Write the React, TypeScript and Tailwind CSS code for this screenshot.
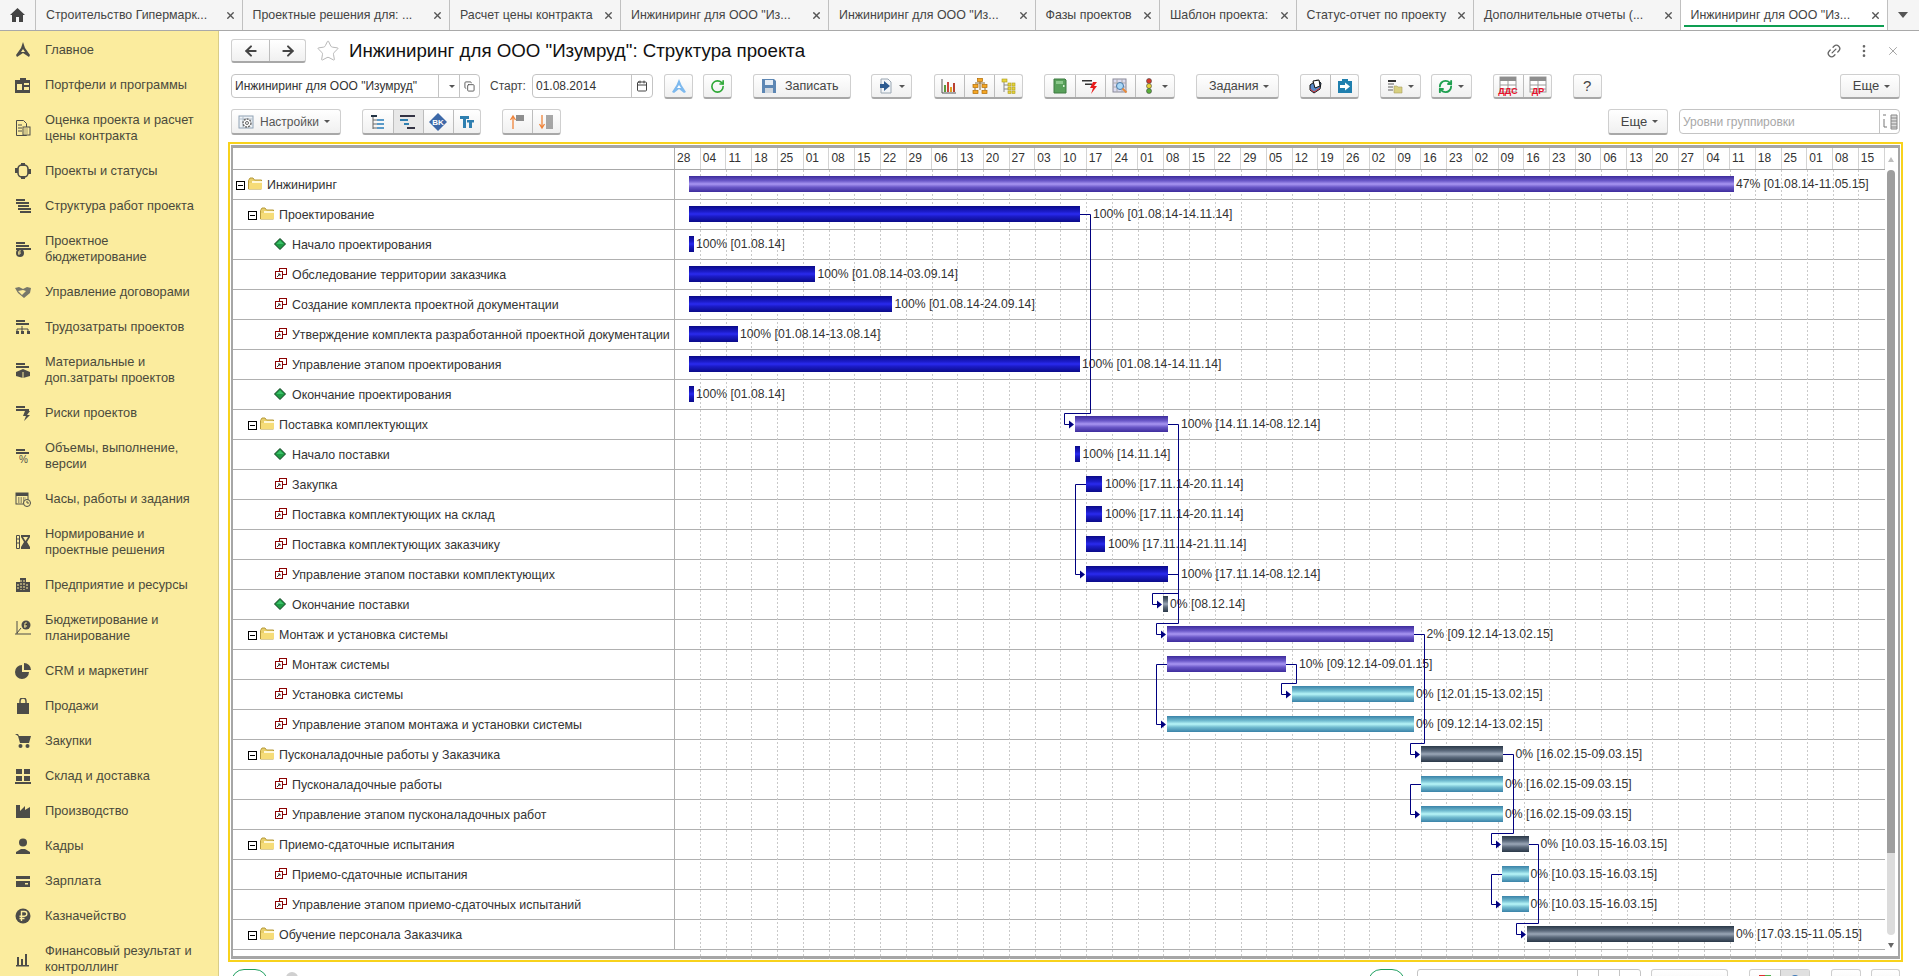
import type { ReactNode } from 'react';
import { ArrowLeft, ArrowRight, Calendar, Copy, Link2, MoreVertical, RefreshCw, RotateCw, Star, X } from 'lucide-react';

type Kind = 'purple' | 'blue' | 'cyan' | 'dark';
type Row = { name: string; level: 0 | 1 | 2; type: 'group' | 'task' | 'mile'; from: number; to: number; kind: Kind; lx: number; text: string };

const barClass: Record<Kind, string> = {
  purple: 'bg-[linear-gradient(#3d2c9c,#6a58c8_30%,#a896f2_50%,#6a58c8_70%,#3d2c9c)]',
  blue: 'bg-[linear-gradient(#0a0a88,#1c1cc8_35%,#2a2aee_50%,#1c1cc8_65%,#0a0a88)]',
  cyan: 'bg-[linear-gradient(#3a82a8,#72bcd0_30%,#b8f6f8_50%,#72bcd0_70%,#3a82a8)]',
  dark: 'bg-[linear-gradient(#2a3848,#5c6a7c_30%,#9aa6b6_50%,#5c6a7c_70%,#2a3848)]',
};

const rows: Row[] = [
  { name: 'Инжиниринг', level: 0, type: 'group', from: 689, to: 1734, kind: 'purple', lx: 1736, text: '47% [01.08.14-11.05.15]' },
  { name: 'Проектирование', level: 1, type: 'group', from: 689, to: 1080, kind: 'blue', lx: 1093, text: '100% [01.08.14-14.11.14]' },
  { name: 'Начало проектирования', level: 2, type: 'mile', from: 689, to: 694, kind: 'blue', lx: 696, text: '100% [01.08.14]' },
  { name: 'Обследование территории заказчика', level: 2, type: 'task', from: 689, to: 815, kind: 'blue', lx: 817.5, text: '100% [01.08.14-03.09.14]' },
  { name: 'Создание комплекта проектной документации', level: 2, type: 'task', from: 689, to: 892, kind: 'blue', lx: 894.5, text: '100% [01.08.14-24.09.14]' },
  { name: 'Утверждение комплекта разработанной проектной документации', level: 2, type: 'task', from: 689, to: 738, kind: 'blue', lx: 740, text: '100% [01.08.14-13.08.14]' },
  { name: 'Управление этапом проектирования', level: 2, type: 'task', from: 689, to: 1080, kind: 'blue', lx: 1082, text: '100% [01.08.14-14.11.14]' },
  { name: 'Окончание проектирования', level: 2, type: 'mile', from: 689, to: 694, kind: 'blue', lx: 696, text: '100% [01.08.14]' },
  { name: 'Поставка комплектующих', level: 1, type: 'group', from: 1075, to: 1168, kind: 'purple', lx: 1181, text: '100% [14.11.14-08.12.14]' },
  { name: 'Начало поставки', level: 2, type: 'mile', from: 1075, to: 1080, kind: 'blue', lx: 1082.5, text: '100% [14.11.14]' },
  { name: 'Закупка', level: 2, type: 'task', from: 1086, to: 1102, kind: 'blue', lx: 1105, text: '100% [17.11.14-20.11.14]' },
  { name: 'Поставка комплектующих на склад', level: 2, type: 'task', from: 1086, to: 1102, kind: 'blue', lx: 1105, text: '100% [17.11.14-20.11.14]' },
  { name: 'Поставка комплектующих заказчику', level: 2, type: 'task', from: 1086, to: 1105, kind: 'blue', lx: 1108, text: '100% [17.11.14-21.11.14]' },
  { name: 'Управление этапом поставки комплектующих', level: 2, type: 'task', from: 1086, to: 1168, kind: 'blue', lx: 1181, text: '100% [17.11.14-08.12.14]' },
  { name: 'Окончание поставки', level: 2, type: 'mile', from: 1163, to: 1168, kind: 'dark', lx: 1170, text: '0% [08.12.14]' },
  { name: 'Монтаж и установка системы', level: 1, type: 'group', from: 1167, to: 1414, kind: 'purple', lx: 1426.5, text: '2% [09.12.14-13.02.15]' },
  { name: 'Монтаж системы', level: 2, type: 'task', from: 1167, to: 1286, kind: 'purple', lx: 1299, text: '10% [09.12.14-09.01.15]' },
  { name: 'Установка системы', level: 2, type: 'task', from: 1292, to: 1414, kind: 'cyan', lx: 1416, text: '0% [12.01.15-13.02.15]' },
  { name: 'Управление этапом монтажа и установки системы', level: 2, type: 'task', from: 1167, to: 1414, kind: 'cyan', lx: 1416, text: '0% [09.12.14-13.02.15]' },
  { name: 'Пусконаладочные работы у Заказчика', level: 1, type: 'group', from: 1421, to: 1503, kind: 'dark', lx: 1515.5, text: '0% [16.02.15-09.03.15]' },
  { name: 'Пусконаладочные работы', level: 2, type: 'task', from: 1421, to: 1503, kind: 'cyan', lx: 1505, text: '0% [16.02.15-09.03.15]' },
  { name: 'Управление этапом пусконаладочных работ', level: 2, type: 'task', from: 1421, to: 1503, kind: 'cyan', lx: 1505, text: '0% [16.02.15-09.03.15]' },
  { name: 'Приемо-сдаточные испытания', level: 1, type: 'group', from: 1502, to: 1529, kind: 'dark', lx: 1540.5, text: '0% [10.03.15-16.03.15]' },
  { name: 'Приемо-сдаточные испытания', level: 2, type: 'task', from: 1502, to: 1529, kind: 'cyan', lx: 1530.5, text: '0% [10.03.15-16.03.15]' },
  { name: 'Управление этапом приемо-сдаточных испытаний', level: 2, type: 'task', from: 1502, to: 1529, kind: 'cyan', lx: 1530.5, text: '0% [10.03.15-16.03.15]' },
  { name: 'Обучение персонала Заказчика', level: 1, type: 'group', from: 1527, to: 1734, kind: 'dark', lx: 1736, text: '0% [17.03.15-11.05.15]' },
];

const weeks = '28 04 11 18 25 01 08 15 22 29 06 13 20 27 03 10 17 24 01 08 15 22 29 05 12 19 26 02 09 16 23 02 09 16 23 30 06 13 20 27 04 11 18 25 01 08 15'.split(' ');

// линии связей в координатах страницы
const links = [
  ['M1080 214.5H1090.5V413.5H1064.5V424.5H1073', 1073, 424.5],
  ['M1168 424.5H1178.5V623.5H1156.5V634.5H1165', 1165, 634.5],
  ['M1168 574.5H1178.5M1178.5 593.5H1152.5V604.5H1161', 1161, 604.5],
  ['M1086 484.5H1075.5V574.5H1084', 1084, 574.5],
  ['M1414 634.5H1424.5V743.5H1410.5V754.5H1419', 1419, 754.5],
  ['M1167 664.5H1156.5V724.5H1165', 1165, 724.5],
  ['M1286 664.5H1296.5V683.5H1281.5V694.5H1290', 1290, 694.5],
  ['M1421 784.5H1410.5V814.5H1419', 1419, 814.5],
  ['M1503 754.5H1513.5V833.5H1491.5V844.5H1500', 1500, 844.5],
  ['M1502 874.5H1491.5V904.5H1500', 1500, 904.5],
  ['M1529 844.5H1538.5V923.5H1516.5V934.5H1525', 1525, 934.5],
] as const;

const S = ({ children, w = 16, h = 16, className }: { children: ReactNode; w?: number; h?: number; className?: string }) => (
  <svg width={w} height={h} viewBox={`0 0 ${w} ${h}`} className={`shrink-0 ${className ?? ''}`}>{children}</svg>
);

const ink = '#4c4c48';
const bars3 = (
  <>
    <rect x="1" y="1" width="9" height="2" fill={ink} />
    <rect x="1" y="4" width="13" height="2" fill={ink} />
  </>
);

const side: { label: string; icon: ReactNode }[] = [
  { label: 'Главное', icon: <S><path d="M8 0l2 6 5 7-1 2-6-4-6 4-1-2 5-7z" fill={ink} /><path d="M8 7l-2 3h4z" fill="#fbec9e" /></S> },
  { label: 'Портфели и программы', icon: <S><path d="M5 3V1h6v2h4v13H0V3z" fill={ink} /><rect x="2" y="7" width="5" height="6" fill="#fbec9e" /><rect x="9" y="6" width="5" height="2" fill="#fbec9e" /><rect x="9" y="10" width="5" height="3" fill="#fbec9e" /></S> },
  { label: 'Оценка проекта и расчет цены контракта', icon: <S><path d="M1.5.5h7l3 3v12h-10z" fill="none" stroke={ink} /><path d="M3 5h4M3 8h4M3 11h4" stroke={ink} /><rect x="8" y="7" width="7" height="8" fill="#fbec9e" stroke={ink} /><path d="M9.5 9h4M9.5 11h4M9.5 13h4" stroke={ink} strokeDasharray="1 1" /></S> },
  { label: 'Проекты и статусы', icon: <S><rect x="3" y="2" width="10" height="12" rx="4" fill="none" stroke={ink} strokeWidth="1.6" /><rect x="0" y="5" width="3" height="5" fill={ink} /><rect x="13" y="6" width="3" height="5" fill={ink} /><rect x="6" y="0" width="4" height="3" fill={ink} /><rect x="6" y="13" width="4" height="3" fill={ink} /></S> },
  { label: 'Структура работ проекта', icon: <S><path d="M1 1h9v2H1zM1 4h13v2H1zM3 7h11v2H3zM3 10h13v2H3zM5 13h11v2H5z" fill={ink} /></S> },
  { label: 'Проектное бюджетирование', icon: <S>{bars3}<rect x="1" y="7" width="15" height="2" fill={ink} /><circle cx="5" cy="12" r="4" fill={ink} /><path d="M4 14v-4h2M3 12h3" stroke="#fbec9e" /></S> },
  { label: 'Управление договорами', icon: <S><path d="M0 4l4-1 4 2 4-2 4 1-1 5-6 5-6-5z" fill="#77776a" /><path d="M3 7l4 4 4-4-3-1z" fill="#fbec9e" /></S> },
  { label: 'Трудозатраты проектов', icon: <S>{bars3}<path d="M7 7v3M2 10h11M2 10v2M7 10v2M13 10v2" stroke={ink} /><rect x="1" y="12" width="3" height="3" fill={ink} /><rect x="6" y="12" width="3" height="3" fill={ink} /><rect x="12" y="12" width="3" height="3" fill={ink} /></S> },
  { label: 'Материальные и доп.затраты проектов', icon: <S>{bars3}<path d="M8 7l7 3v4l-7 2-7-2v-4z" fill={ink} /><path d="M8 10v6" stroke="#fbec9e" /></S> },
  { label: 'Риски проектов', icon: <S>{bars3}<path d="M10 6h5l-3 4h3l-6 6 2-5H8z" fill={ink} /></S> },
  { label: 'Объемы, выполнение, версии', icon: <S>{bars3}<text x="4" y="15" fontSize="10" fill={ink}>%</text></S> },
  { label: 'Часы, работы и задания', icon: <S><rect x="1" y="2" width="12" height="11" fill="none" stroke={ink} /><rect x="1" y="2" width="12" height="3" fill={ink} /><path d="M3 7h8M3 9h8M3 11h6" stroke={ink} strokeDasharray="1.5 1" /><circle cx="12" cy="12" r="3.5" fill="#fbec9e" stroke={ink} /><path d="M12 10v2h2" stroke={ink} fill="none" /></S> },
  { label: 'Нормирование и проектные решения', icon: <S><path d="M1.5 1.5h3v13h-3z" fill="none" stroke={ink} /><path d="M1 5h3M1 9h3" stroke={ink} /><path d="M6 1h9v2l-3 5 3 5v2H6v-2l3-5-3-5z" fill={ink} /><path d="M8 3h5l-2.500 4z" fill="#fbec9e" /></S> },
  { label: 'Предприятие и ресурсы', icon: <S><path d="M1 5h4V1h6v4h4v10H1z" fill={ink} /><path d="M3 7v6M6 3v10M9 3v10M12 7v6" stroke="#fbec9e" strokeDasharray="2 1" /></S> },
  { label: 'Бюджетирование и планирование', icon: <S><path d="M2 1v13M0 14h16" stroke={ink} fill="none" /><path d="M2 13l4-5" stroke={ink} /><circle cx="11" cy="5" r="4.500" fill={ink} /><path d="M10 8V3h2M9 6h3" stroke="#fbec9e" /></S> },
  { label: 'CRM и маркетинг', icon: <S><path d="M7 2a7 7 0 1 0 7 7H7z" fill={ink} /><path d="M9 0a7 7 0 0 1 7 7H9z" fill={ink} /></S> },
  { label: 'Продажи', icon: <S><path d="M2 5h12v11H2z" fill={ink} /><path d="M5 7V3a3 3 0 0 1 6 0v4" stroke={ink} fill="none" strokeWidth="1.4" /></S> },
  { label: 'Закупки', icon: <S><path d="M0 1h3l1 2h12l-2 7H5L3 3" fill={ink} /><circle cx="5.500" cy="13" r="2" fill={ink} /><circle cx="12.500" cy="13" r="2" fill={ink} /></S> },
  { label: 'Склад и доставка', icon: <S><path d="M1 1h6v5H1zM9 1h6v5H9zM1 8h6v5H1zM9 8h6v5H9zM0 14h16v2H0z" fill={ink} /></S> },
  { label: 'Производство', icon: <S><path d="M1 15V2h4v6l5-5v4l5-3v11z" fill={ink} /></S> },
  { label: 'Кадры', icon: <S><circle cx="8" cy="4.500" r="4" fill={ink} /><path d="M1 16v-2l5-3h4l5 3v2z" fill={ink} /></S> },
  { label: 'Зарплата', icon: <S><path d="M1 3h14v11H1z" fill={ink} /><path d="M1 6h14v2H1z" fill="#fbec9e" /><rect x="10" y="10" width="3" height="1.500" fill="#fbec9e" /></S> },
  { label: 'Казначейство', icon: <S><circle cx="8" cy="8" r="7.500" fill={ink} /><path d="M6.500 13V3.500h3a2.300 2.300 0 0 1 0 4.700h-5M4.500 10.500h5" stroke="#fbec9e" strokeWidth="1.400" fill="none" /></S> },
  { label: 'Финансовый результат и контроллинг', icon: <S><path d="M2 6h2v8H2zM6 8h2v6H6zM10 3h2v11h-2zM1 14h13v1.500H1z" fill={ink} /></S> },
];

const tabs = [
  { t: 'Строительство Гипермарк...', w: 'w-[206.5px]' },
  { t: 'Проектные решения для: ...', w: 'w-[207.5px]' },
  { t: 'Расчет цены контракта', w: 'w-[171px]' },
  { t: 'Инжиниринг для ООО "Из...', w: 'w-[208px]' },
  { t: 'Инжиниринг для ООО "Из...', w: 'w-[206.5px]' },
  { t: 'Фазы проектов', w: 'w-[124.5px]' },
  { t: 'Шаблон проекта:', w: 'w-[136.5px]' },
  { t: 'Статус-отчет по проекту', w: 'w-[177.5px]' },
  { t: 'Дополнительные отчеты (...', w: 'w-[206.5px]' },
];

const btn = 'flex h-full items-center justify-center rounded-[3px] border border-[#cfcfcf] border-b-[2px] border-b-[#a8a8a8] bg-[linear-gradient(#ffffff,#f0f0f0)] text-[#444]';
const cell = 'flex h-full items-center justify-center border-l border-[#bdbdbd] first:border-l-0';
const grp = 'flex h-full rounded-[3px] border border-[#cfcfcf] border-b-[2px] border-b-[#a8a8a8] bg-[linear-gradient(#ffffff,#f0f0f0)]';
const caret = <span className="ml-[5px] h-0 w-0 border-x-[3.500px] border-t-[3.500px] border-x-transparent border-t-[#555]" />;

function TaskIcon() {
  return <S w={12} h={11}><rect x="4.500" y=".5" width="7" height="6" fill="#fff" stroke="#8b0000" /><rect x=".5" y="3.500" width="7" height="7" fill="#fff" stroke="#8b0000" /><path d="M2 9l3-3M3 6h2v2" stroke="#333" fill="none" /></S>;
}
function MileIcon() {
  return <S w={12} h={12} className="ml-[-1px] mr-[1px] mt-[-3px]"><path d="M6 .5L11.500 6 6 11.500.5 6z" fill="#1f9a44" stroke="#0d3d1c" /><path d="M6 2.500L9.500 6H2.500z" fill="#3cc26a" /></S>;
}
function GroupIcon() {
  return (
    <>
      <span className="relative mr-[3px] h-[9px] w-[9px] shrink-0 border border-black bg-white">
        <span className="absolute left-[1px] top-[3px] h-px w-[5px] bg-black" />
      </span>
      <S w={15} h={13} className="mt-[-3px]">
        <path d="M.5 3.500v8.500h13V3h-7L5 1H2z" fill="#e9cf6a" stroke="#b69a3a" />
        <path d="M1 6h13v6H1z" fill="#f6dc78" />
        <path d="M4 4h10v2H4z" fill="#fff8d8" />
      </S>
    </>
  );
}

function Tree({ row }: { row: Row }) {
  const pad = row.level === 0 ? 'pl-[3px]' : row.level === 1 ? 'pl-[15px]' : 'pl-[42px]';
  return (
    <div className={`flex h-full w-[442px] shrink-0 items-center overflow-hidden border-r border-[#b0b0b0] pt-px text-[12.400px] ${pad}`}>
      {row.type === 'group' && <GroupIcon />}
      {row.type === 'task' && <span className="mt-[-3px]"><TaskIcon /></span>}
      {row.type === 'mile' && <MileIcon />}
      <span className={`whitespace-nowrap ${row.type === 'group' ? 'ml-[4px]' : 'ml-[5px]'}`}>{row.name}</span>
    </div>
  );
}

function Gantt() {
  return (
    <div className="relative flex flex-1 flex-col">
      <svg width="1209" height="789" viewBox="675 170 1209 789" className="absolute left-[442px] top-[22px]">
        {weeks.slice(1).map((_, i) => (
          <line key={i} x1={700.5 + Math.round(i * 25.74)} x2={700.5 + Math.round(i * 25.74)} y1="170" y2="959" stroke="#c9c9c9" strokeDasharray="2 2" />
        ))}
      </svg>
      <div className="flex h-[22px] shrink-0 border-b border-[#a8a8a8]">
        <div className="w-[442px] shrink-0 border-r border-[#b0b0b0]" />
        <div className="grid flex-1 grid-cols-[repeat(47,25.74px)] overflow-hidden">
          {weeks.map((w, i) => (
            <div key={i} className="h-full border-r border-[#d4d4d4] pl-[2px] leading-[21px]">{w}</div>
          ))}
        </div>
      </div>
      {rows.map((r, i) => (
        <div key={i} className="flex h-[30px] shrink-0 border-b border-[#b0b0b0]">
          <Tree row={r} />
          <div className="relative flex-1 text-[12.200px]">
            <div className={`absolute top-[6px] h-[16px] ${barClass[r.kind]}`} style={{ left: r.from - 675, width: r.to - r.from }} />
            <div className="absolute top-[6px] whitespace-nowrap leading-[16px]" style={{ left: r.lx - 675 }}>{r.text}</div>
          </div>
        </div>
      ))}
      <svg width="1209" height="789" viewBox="675 170 1209 789" className="pointer-events-none absolute left-[442px] top-[22px]">
        {links.map(([d, x, y], i) => (
          <g key={i}>
            <path d={d} fill="none" stroke="#000080" strokeWidth="1" />
            <path d={`M${x - 4} ${y - 4}L${x + 1} ${y}L${x - 4} ${y + 4}z`} fill="#000080" />
          </g>
        ))}
      </svg>
    </div>
  );
}

function Scroll() {
  return (
    <div className="flex w-[14px] shrink-0 flex-col items-center pr-px">
      <div className="flex h-[22px] w-full items-center justify-center">
        <span className="h-0 w-0 border-x-[3.500px] border-b-[5px] border-x-transparent border-b-[#bdbdbd]" />
      </div>
      <div className="h-[683px] w-[8px] rounded-t-[4px] bg-[#9e9e9e]" />
      <div className="h-[82px] w-[8px] rounded-b-[4px] bg-[#dcdcdc]" />
      <div className="flex flex-1 items-center justify-center">
        <span className="h-0 w-0 border-x-[3.500px] border-t-[5px] border-x-transparent border-t-[#666]" />
      </div>
    </div>
  );
}

const Tbl = ({ label }: { label: string }) => (
  <S w={22} h={20}>
    <rect x="3" y="1" width="16" height="15" fill="#fff" stroke="#9a9a9a" />
    <rect x="3" y="1" width="16" height="4" fill="#8e8e8e" />
    <path d="M3 9h16M3 13h16M11 5v11" stroke="#9a9a9a" />
    <text x="11" y="18" fontSize="9" fontWeight="bold" fill="#e8102a" textAnchor="middle">{label}</text>
  </S>
);

function Toolbar() {
  return (
    <div className="ml-[2px] mt-[11px] flex h-[25px] shrink-0">
      <div className="flex h-[24px] w-[249px] items-center rounded-[4px] border border-[#c4c4c4] bg-white text-[#333]">
        <span className="w-[206px] truncate pl-[3px]">Инжиниринг для ООО "Изумруд"</span>
        <span className="flex h-full w-[21px] items-center justify-center border-l border-[#c4c4c4]">{caret}</span>
        <span className="flex h-full flex-1 items-center justify-center border-l border-[#c4c4c4]"><Copy size={11} color="#555" /></span>
      </div>
      <span className="ml-[10px] w-[42px] leading-[24px] text-[#444]">Старт:</span>
      <div className="flex h-[24px] w-[121px] items-center rounded-[4px] border border-[#c4c4c4] bg-white">
        <span className="flex-1 pl-[3px] text-[#333]">01.08.2014</span>
        <span className="flex h-full w-[21px] items-center justify-center border-l border-[#c4c4c4]"><Calendar size={12} color="#444" /></span>
      </div>
      <div className={`${btn} ml-[11px] w-[29px]`}><S><path d="M8 1l2.500 6 4.500 7-2 1-5-4-5 4-2-1 4.500-7z" fill="#7db9ee" /><path d="M8 7l-2 3h4z" fill="#fff" /></S></div>
      <div className={`${btn} ml-[10px] w-[29px]`}><RotateCw size={15} color="#2ea836" strokeWidth={2.6} /></div>
      <div className={`${btn} ml-[21px] w-[98px] justify-start pl-[7px]`}>
        <S><path d="M1 1h12l2 2v12H1z" fill="#5d87b4" /><rect x="4" y="2" width="8" height="5" fill="#e6edf5" /><rect x="4" y="10" width="8" height="5" fill="#cfd6de" /></S>
        <span className="ml-[8px] text-[12.500px]">Записать</span>
      </div>
      <div className={`${btn} ml-[20px] w-[41px]`}>
        <S><path d="M3 1h7l3 3v11H3z" fill="#f2f5f8" stroke="#9aa6b2" /><path d="M2 6h4V3l6 5-6 5v-3H2z" fill="#2c5a90" /></S>
        {caret}
      </div>
      <div className={`${grp} ml-[21.500px]`}>
        <div className={`${cell} w-[29.500px]`}><S><path d="M1 1v14h14" stroke="#555" fill="none" /><rect x="3" y="7" width="2" height="7" fill="#5a9a3a" /><rect x="6" y="4" width="2" height="10" fill="#c8443a" /><rect x="9" y="9" width="2" height="5" fill="#e0a020" /><rect x="12" y="5" width="2" height="9" fill="#b84030" /></S></div>
        <div className={`${cell} w-[30px]`}><S><g fill="#f5a623" stroke="#b06a00" strokeWidth=".7"><rect x="5.500" y=".5" width="5" height="3" /><rect x="1" y="6.500" width="5" height="3" /><rect x="10" y="6.500" width="5" height="3" /><rect x="1" y="12.500" width="5" height="3" /><rect x="10" y="12.500" width="5" height="3" /></g><path d="M8 4v8M3 10v2M13 10v2M3 5h10" stroke="#8a6a30" fill="none" /></S></div>
        <div className={`${cell} w-[28px]`}><S><path d="M3 3v11M3 7h4M3 11h4" stroke="#888" fill="none" /><g fill="#e8d43a" stroke="#a89a20" strokeWidth=".6"><rect x="1" y="1" width="5" height="3" /><rect x="7" y="5" width="3" height="3" /><rect x="11" y="5" width="3" height="3" /><rect x="7" y="9" width="3" height="3" /><rect x="11" y="9" width="3" height="3" /><rect x="7" y="13" width="3" height="2.500" /><rect x="11" y="13" width="3" height="2.500" /></g></S></div>
      </div>
      <div className={`${grp} ml-[21px]`}>
        <div className={`${cell} w-[29.500px]`}><S><path d="M2 1h11l1 1v13H2z" fill="#58a05a" stroke="#3c7a40" /><rect x="4" y="3" width="7" height="3" fill="#8cc88c" /><rect x="11" y="7" width="1.500" height="2" fill="#d8efd8" /></S></div>
        <div className={`${cell} w-[30px]`}><S><path d="M0 2h10v1.500H0zM3 5.500h7V7H3z" fill="#333" /><path d="M11 4l-3 6h3l-2 6 6-8h-3l3-4z" fill="#e81c1c" /></S></div>
        <div className={`${cell} w-[30px]`}><S><rect x="1" y="1" width="13" height="13" fill="#dcdcf0" stroke="#8a8a9a" /><path d="M1 5h13M1 9h13M5 1v13M10 1v13" stroke="#aaa" /><circle cx="8" cy="8" r="3.500" fill="#a8d8f8" stroke="#4a78a8" /><path d="M10.500 10.500l4 4" stroke="#e88a3a" strokeWidth="2" /></S></div>
        <div className={`${cell} w-[39px]`}><S><circle cx="8" cy="3" r="2.500" fill="#d83a2a" stroke="#444" strokeWidth=".6" /><circle cx="8" cy="8" r="2.500" fill="#e8d43a" stroke="#444" strokeWidth=".6" /><circle cx="8" cy="13" r="2.500" fill="#5ab03a" stroke="#444" strokeWidth=".6" /></S>{caret}</div>
      </div>
      <div className={`${btn} ml-[21px] w-[83.500px] pl-[4px]`}><span className="text-[12.500px]">Задания</span>{caret}</div>
      <div className={`${grp} ml-[20.500px]`}>
        <div className={`${cell} w-[29.500px]`}><S><path d="M3 7l7-5 4 3-1 6-6 4-4-3z" fill="#5a8ac8" stroke="#111" /><path d="M6 3l6-1 1 6-5 2z" fill="#fff" stroke="#111" /><path d="M3 11l4 3 6-4" stroke="#d83a3a" fill="none" /></S></div>
        <div className={`${cell} w-[28px]`}><S><path d="M5 3V1h6v2h4v12H1V3z" fill="#1f7fae" /><path d="M3 7h5V4.500L13 8.500l-5 4V10H3z" fill="#fff" /></S></div>
      </div>
      <div className={`${btn} ml-[21px] w-[41px]`}><S><path d="M1 2h8v2H1z" fill="#333" /><path d="M1 5h6v2H1zM1 8h5v2H1zM1 11h5v2H1z" fill="#aaa" /><path d="M7 8h3l1 1h4v6H7z" fill="#d8d080" stroke="#a8a060" strokeWidth=".6" /></S>{caret}</div>
      <div className={`${btn} ml-[9.500px] w-[41.500px]`}><RefreshCw size={15} color="#1fa050" strokeWidth={3} />{caret}</div>
      <div className={`${grp} ml-[20.500px]`}>
        <div className={`${cell} w-[29.500px]`}><Tbl label="ДДС" /></div>
        <div className={`${cell} w-[28px]`}><Tbl label="ДР" /></div>
      </div>
      <div className={`${btn} ml-[20.500px] w-[29.500px] text-[15px] text-[#222]`}>?</div>
      <div className={`${btn} ml-auto mr-[19px] w-[60px] pl-[3px]`}><span className="text-[13px]">Еще</span>{caret}</div>
    </div>
  );
}

function Toolbar2() {
  return (
    <div className="ml-[2px] mt-[10px] flex h-[26px] shrink-0">
      <div className={`${btn} w-[110px] justify-start pl-[6px]`}>
        <S><rect x="1" y="2" width="14" height="12" fill="#eef2f6" stroke="#8fa2b4" /><path d="M1 5h14M5 2v12" stroke="#b4c0cc" /><circle cx="9" cy="9" r="4" fill="#fff" stroke="#666" strokeWidth="1.400" strokeDasharray="2 1" /><circle cx="9" cy="9" r="1.500" fill="none" stroke="#666" /></S>
        <span className="ml-[6px] text-[#555]">Настройки</span>{caret}
      </div>
      <div className={`${grp} ml-[21px]`}>
        <div className={`${cell} w-[29.500px]`}><S><path d="M1 1h6v2H1z" fill="#234" /><path d="M3 3v12M3 6h4M3 10h4M3 14h4" stroke="#666" fill="none" /><path d="M7 5h7v2H7zM7 9h7v2H7zM7 13h7v2H7z" fill="#5a9ac8" /></S></div>
        <div className={`${cell} w-[30px] bg-[#e8e8e8]`}><S w={18} h={16}><path d="M1 1h15v2H1z" fill="#334" /><path d="M1 5h8v2H1zM5 9h5v2H5z" fill="#2f7fb0" /><path d="M8 13h8v2H8z" fill="#334" /></S></div>
        <div className={`${cell} w-[30px]`}><S w={18} h={18}><path d="M9 0l9 9-9 9-9-9z" fill="#3c68a8" /><text x="9" y="12" fontSize="8" fontWeight="bold" fill="#fff" textAnchor="middle">BK</text></S></div>
        <div className={`${cell} w-[27.500px]`}><S><path d="M1 2h9v3H7v9H4V5H1z" fill="#2f7fb0" /><path d="M8 6h7v2.500h-2V14h-3V8.500H8z" fill="#2f7fb0" /></S></div>
      </div>
      <div className={`${grp} ml-[20.500px]`}>
        <div className={`${cell} w-[29.500px]`}><S><path d="M4 15V3M1.500 6L4 2l2.500 4" stroke="#f0843a" fill="none" strokeWidth="1.300" /><path d="M7 2h8M7 4h8M7 6h8" stroke="#222" /></S></div>
        <div className={`${cell} w-[27.500px]`}><S><path d="M4 1v12M1.500 10L4 14l2.500-4" stroke="#f0843a" fill="none" strokeWidth="1.300" /><path d="M8 2h7M8 4h7M8 6h7M8 8h7M8 10h7M8 12h7M8 14h7" stroke="#555" /></S></div>
      </div>
      <div className={`${btn} ml-auto w-[60px] pl-[3px]`}><span className="text-[13px]">Еще</span>{caret}</div>
      <div className="ml-[11px] mr-[19px] flex h-[25px] w-[221px] items-center rounded-[4px] border border-[#c4c4c4] bg-white">
        <span className="flex-1 pl-[3px] text-[#a8a8a8]">Уровни группировки</span>
        <span className="flex h-full w-[20px] items-center justify-center border-l border-[#c4c4c4]"><S><path d="M1 1h3M2 5v8h3" stroke="#777" fill="none" /><path d="M9 1h6v14H9z" fill="#ddd" stroke="#888" /><path d="M9 4h6M9 7h6M9 10h6M9 13h6" stroke="#888" /></S></span>
      </div>
    </div>
  );
}

function Bottom() {
  return (
    <div className="ml-[2px] mt-[7px] flex h-[26px] shrink-0">
      <div className="h-full w-[37px] rounded-full border border-[#1fa060] bg-white" />
      <div className="ml-[18px] mt-[3px] h-[12px] w-[12px] rounded-full bg-[#d0d0d0]" />
      <div className="ml-auto h-full w-[37px] rounded-full border border-[#1fa060] bg-white" />
      <div className="ml-[12px] flex h-full w-[224px] rounded-[3px] border border-[#c4c4c4] bg-white">
        <span className="ml-auto w-[21px] border-l border-[#c4c4c4]" />
        <span className="w-[21px] border-l border-[#c4c4c4]" />
        <span className="w-[21px] border-l border-[#c4c4c4]" />
      </div>
      <div className={`${btn} ml-[10px] w-[77px]`} />
      <div className={`${grp} ml-[21px]`}>
        <div className={`${cell} w-[30px]`}><span className="mt-[-10px] h-[3px] w-[12px] bg-[linear-gradient(90deg,#e03030_50%,#50b050_50%)]" /></div>
        <div className={`${cell} w-[29px] bg-[#e0e0e0]`}><span className="mt-[-10px] h-[4px] w-[8px] rounded-t-full bg-[#3c78b8]" /></div>
      </div>
      <div className={`${btn} ml-[21px] w-[30px]`} />
      <div className={`${btn} ml-[10px] mr-[19px] w-[29px]`} />
    </div>
  );
}

export default function App() {
  return (
    <div className="flex h-[976px] w-[1919px] flex-col overflow-hidden bg-white font-['Liberation_Sans',Arial,sans-serif] text-[12px] text-[#333]">
      <div className="flex h-[31px] shrink-0 border-b border-[#a9a9a9] bg-[#f5f5f5] text-[12.400px]">
        <div className="flex w-[36px] items-center justify-center border-r border-[#c0c0c0]">
          <S w={15} h={14}><path d="M7.500 0L15 7h-2v7H9V9H6v5H2V7H0z" fill="#444" /></S>
        </div>
        {tabs.map((t, i) => (
          <div key={i} className={`flex items-center justify-between border-r border-[#c0c0c0] pl-[10px] pr-[6px] text-[#444] ${t.w}`}>
            <span className="whitespace-nowrap">{t.t}</span>
            <X size={11} strokeWidth={3} color="#555" />
          </div>
        ))}
        <div className="relative flex w-[207px] items-center justify-between border-r border-[#c0c0c0] bg-white pl-[10px] pr-[6px] text-[#444]">
          <span className="whitespace-nowrap">Инжиниринг для ООО "Из...</span>
          <X size={11} strokeWidth={3} color="#555" />
          <span className="absolute bottom-[3px] left-[3px] right-[3px] h-[2px] bg-[#0e9e52]" />
        </div>
        <div className="flex flex-1 items-center justify-center">
          <span className="h-0 w-0 border-x-[5px] border-t-[6px] border-x-transparent border-t-[#555]" />
        </div>
      </div>

      <div className="flex min-h-0 flex-1">
        <aside className="w-[219px] shrink-0 overflow-hidden border-r border-[#d9cd88] bg-[#fbec9e] pt-px text-[12.800px]">
          {side.map((s) => (
            <div key={s.label} className="flex items-center py-[9.500px] pl-[15px] text-[#4a4a3c]">
              {s.icon}
              <span className="ml-[14px] w-[156px] leading-[16px]">{s.label}</span>
            </div>
          ))}
        </aside>

        <main className="flex min-w-0 flex-1 flex-col pl-[10px] pt-[8px]">
          <div className="ml-[2px] flex h-[24px] shrink-0 items-center">
            <div className={`${grp}`}>
              <div className={`${cell} w-[37px]`}><ArrowLeft size={16} strokeWidth={3} color="#444" /></div>
              <div className={`${cell} w-[36px]`}><ArrowRight size={16} strokeWidth={3} color="#444" /></div>
            </div>
            <Star size={24} strokeWidth={1} color="#b8b8b8" className="ml-[10px]" />
            <h1 className="ml-[9px] mt-px whitespace-nowrap text-[18.700px] text-[#111]">Инжиниринг для ООО "Изумруд": Структура проекта</h1>
            <Link2 size={16} color="#666" className="ml-auto -rotate-45" />
            <MoreVertical size={16} color="#666" className="ml-[14px]" />
            <X size={14} strokeWidth={1} color="#666" className="ml-[14px] mr-[19px]" />
          </div>
          <Toolbar />
          <Toolbar2 />
          <div className="ml-[-1px] mt-[7px] h-[820px] w-[1675px] shrink-0 border-2 border-[#f8d21c] p-px">
            <div className="flex h-full border-x-2 border-b-[3px] border-t-[3px] border-[#a6a6a6]">
              <Gantt />
              <Scroll />
            </div>
          </div>
          <Bottom />
        </main>
      </div>
    </div>
  );
}
